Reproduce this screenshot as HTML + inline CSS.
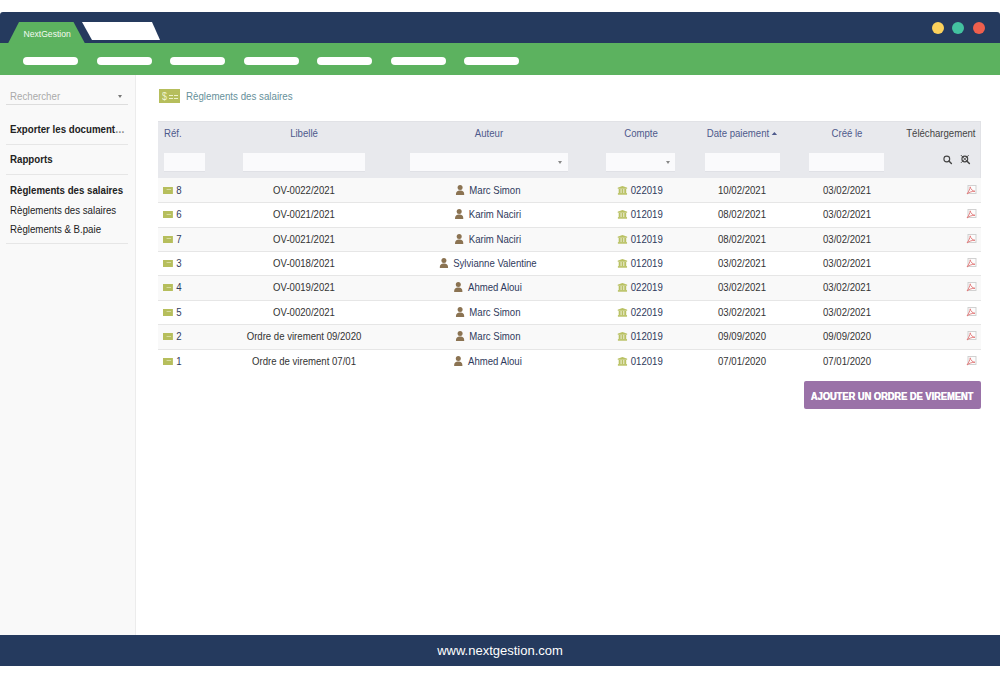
<!DOCTYPE html>
<html><head><meta charset="utf-8">
<style>
*{margin:0;padding:0;box-sizing:border-box}
html,body{width:1000px;height:679px;overflow:hidden;background:#fff;font-family:"Liberation Sans",sans-serif}
.abs{position:absolute}
#topbar{position:absolute;left:0;top:12px;width:1000px;height:31px;background:#253a5e;border-radius:3px 3px 0 0}
#greenbar{position:absolute;left:0;top:43px;width:1000px;height:32px;background:#5cb25f}
.pill{position:absolute;top:57px;height:8px;width:55px;background:#fff;border-radius:4px}
.dot{position:absolute;top:21.5px;width:12px;height:12px;border-radius:6px}
#sidebar{position:absolute;left:0;top:75px;width:136px;height:560px;background:#f9f9f9;border-right:1px solid #ececec}
#footer{position:absolute;left:0;top:635px;width:1000px;height:31px;background:#253a5e;color:#fff;font-size:13px;text-align:center;line-height:31px}
.side{position:absolute;left:9.5px;font-size:10.6px;color:#222;white-space:nowrap;transform-origin:0 0;transform:scaleX(0.915)}
.sep{position:absolute;left:6px;width:122px;height:1px;background:#e6e6e6}

.title{position:absolute;left:185.8px;top:89.5px;font-size:11px;color:#66909a;white-space:nowrap;transform:scaleX(0.885);transform-origin:0 0}
.ticon{position:absolute;left:159px;top:88.5px;width:20.5px;height:14.5px;background:#b6be5c}
#thead{position:absolute;left:158.3px;top:120.5px;width:822.5px;height:57.5px;background:#e8e9ed;border-top:1px solid #e1e2e6;border-right:1px solid #e1e2e6}
.th{position:absolute;top:127.4px;font-size:10.67px;color:#4e5a8c;white-space:nowrap;transform:scaleX(0.9);transform-origin:50% 50%}
.inp{position:absolute;top:152.8px;height:18.8px;background:#fafafc;border-bottom:1px solid #e0e1e6}
.sarr{position:absolute;width:0;height:0;border-left:2.5px solid transparent;border-right:2.5px solid transparent;border-top:3px solid #888}
.row{position:absolute;left:158.3px;width:822.5px;height:24.3px}
.rsep{position:absolute;left:158.3px;width:822.5px;height:1px;background:#e6e6e6}
.cell{position:absolute;font-size:10.67px;color:#333;white-space:nowrap;line-height:12px;transform:scaleX(0.9);transform-origin:50% 50%}
.c{text-align:center}
.nav{color:#2f3a5c}
.ref{left:163px;transform-origin:0 50%}
.num{color:#2f3a5c;margin-left:4.1px}
.money{display:inline-block;width:10.7px;height:7px;background:#b6be5c;vertical-align:0px;position:relative}
.money i{position:absolute;left:3.5px;top:2.5px;width:5px;height:1px;background:#d8dca0}
.ic{display:inline-block;vertical-align:-1px;margin-right:4px}
.btn{position:absolute;left:803.8px;top:381px;width:177px;height:27.6px;background:#9a72a8;border-radius:2px;color:#fff;font-weight:bold;font-size:11.4px;text-align:center;line-height:27.6px;white-space:nowrap;text-shadow:0.35px 0 0 #fff}
.btn span{position:absolute;left:50%;top:2px;transform:translateX(-50%) scaleX(0.815)}
</style></head>
<body>
<div id="topbar"></div>
<div id="greenbar"></div>
<svg class="abs" style="left:0;top:0" width="200" height="50">
  <polygon points="8,43.5 19,22 73.5,22 85,43.5" fill="#5cb25f"/>
  <polygon points="82,22 152,22 160,40 92,40" fill="#fff"/>
</svg>
<div class="abs" style="left:23.5px;top:29px;font-size:8.6px;color:#f4faf0">NextGestion</div>
<div class="pill" style="left:23px"></div>
<div class="pill" style="left:96.5px"></div>
<div class="pill" style="left:170px"></div>
<div class="pill" style="left:243.5px"></div>
<div class="pill" style="left:317px"></div>
<div class="pill" style="left:390.5px"></div>
<div class="pill" style="left:464px"></div>
<div class="dot" style="left:932px;background:#fcd15c"></div>
<div class="dot" style="left:952px;background:#43c2a0"></div>
<div class="dot" style="left:973px;background:#ef5f4d"></div>

<div id="sidebar"></div>
<div class="side" style="top:90px;color:#aaa">Rechercher</div>
<div class="sarr" style="left:117.5px;top:95px;border-top-color:#777"></div>
<div class="abs" style="left:6px;top:104px;width:122px;height:1px;background:#ddd"></div>
<div class="side" style="top:122.6px;font-weight:bold">Exporter les document<span style="color:#888">…</span></div>
<div class="sep" style="top:143.5px"></div>
<div class="side" style="top:153.3px;font-weight:bold">Rapports</div>
<div class="sep" style="top:174px"></div>
<div class="side" style="top:184px;font-weight:bold">Règlements des salaires</div>
<div class="side" style="top:204px">Règlements des salaires</div>
<div class="side" style="top:223px">Règlements &amp; B.paie</div>
<div class="sep" style="top:243px"></div>


<div class="ticon"></div>
<div class="abs" style="left:162.2px;top:89.6px;font-size:10.5px;color:#f0f3d0;transform:scaleX(0.85);transform-origin:0 0">$</div>
<div class="abs" style="left:169px;top:94.8px;width:4px;height:1.2px;background:#eef2c8"></div>
<div class="abs" style="left:169px;top:97.8px;width:4px;height:1.2px;background:#eef2c8"></div>
<div class="abs" style="left:174px;top:94.8px;width:4px;height:1.2px;background:#eef2c8"></div>
<div class="abs" style="left:174px;top:97.8px;width:4px;height:1.2px;background:#eef2c8"></div>
<div class="title">Règlements des salaires</div>
<div id="thead"></div>
<div class="th" style="left:164px;transform-origin:0 50%">Réf.</div>
<div class="th" style="left:204px;width:200px;text-align:center">Libellé</div>
<div class="th" style="left:388.7px;width:200px;text-align:center">Auteur</div>
<div class="th" style="left:560.7px;width:160px;text-align:center">Compte</div>
<div class="th" style="left:662px;width:160px;text-align:center">Date paiement <span style="display:inline-block;border-left:3.3px solid transparent;border-right:3.3px solid transparent;border-bottom:3.5px solid #4e5a8c;vertical-align:2px"></span></div>
<div class="th" style="left:766.8px;width:160px;text-align:center">Créé le</div>
<div class="th" style="left:825px;width:150.5px;text-align:right;color:#444;transform-origin:100% 50%">Téléchargement</div>
<div class="inp" style="left:163.5px;width:41.5px"></div>
<div class="inp" style="left:243px;width:122px"></div>
<div class="inp" style="left:410px;width:157.5px"></div>
<div class="sarr" style="left:557.5px;top:161px"></div>
<div class="inp" style="left:606px;width:69.3px"></div>
<div class="sarr" style="left:665.5px;top:161px"></div>
<div class="inp" style="left:704.7px;width:75.3px"></div>
<div class="inp" style="left:809px;width:75.3px"></div>
<svg class="abs" style="left:940px;top:152px" width="35" height="16" viewBox="0 0 35 16">
 <circle cx="6.8" cy="7" r="2.9" fill="none" stroke="#444" stroke-width="1.1"/>
 <line x1="8.9" y1="9.1" x2="11.4" y2="11.6" stroke="#444" stroke-width="1.4" stroke-linecap="round"/>
 <circle cx="24.8" cy="7" r="2.9" fill="none" stroke="#444" stroke-width="1.1"/>
 <line x1="20.8" y1="3" x2="29.4" y2="11.6" stroke="#444" stroke-width="0.9"/>
 <line x1="26.9" y1="9.1" x2="29.4" y2="11.6" stroke="#444" stroke-width="1.4" stroke-linecap="round"/>
 <line x1="28.8" y1="3" x2="20.8" y2="11" stroke="#444" stroke-width="0.8"/>
</svg>
<div class="row" style="top:178px;height:24px;background:#f9f9f9"></div>
<div class="cell ref" style="top:183.6px"><span class="money"><i></i></span><span class="num">8</span></div>
<div class="cell c" style="top:183.6px;left:204px;width:200px">OV-0022/2021</div>
<div class="cell c nav" style="top:183.6px;left:388.1px;width:200px"><svg class="ic" style="margin-right:5.4px" width="10" height="10" viewBox="0 0 9 10" preserveAspectRatio="none"><circle cx="4.5" cy="2.5" r="2.5" fill="#8b7352"/><path d="M0.3 10 C0.3 6.2 2 5.4 4.5 5.4 C7 5.4 8.7 6.2 8.7 10 Z" fill="#8b7352"/></svg>Marc Simon</div>
<div class="cell c nav" style="top:183.6px;left:560.2px;width:160px"><svg class="ic" width="11" height="9" viewBox="0 0 10 9" preserveAspectRatio="none" style="vertical-align:-1px"><path d="M5 0 L10 1.8 L10 2.7 L0 2.7 L0 1.8 Z" fill="#b9c163"/><rect x="1.2" y="2.9" width="2" height="4.3" fill="#b9c163"/><rect x="4" y="2.9" width="2" height="4.3" fill="#b9c163"/><rect x="6.8" y="2.9" width="2" height="4.3" fill="#b9c163"/><rect x="0.3" y="7.1" width="9.4" height="1.6" fill="#b9c163"/></svg>022019</div>
<div class="cell c" style="top:183.6px;left:662px;width:160px">10/02/2021</div>
<div class="cell c" style="top:183.6px;left:766.8px;width:160px">03/02/2021</div>
<div class="abs" style="top:184.9px;left:965.5px;line-height:0"><svg class="pdf" width="11" height="10" viewBox="0 0 11 10"><rect x="2" y="0.5" width="8" height="8" fill="#fcfcfc" stroke="#cdcdcd" stroke-width="0.9"/><path d="M1 9 C3 6 4 4 4.2 1.8 C4.8 4.5 6.5 6 9 6.3 C6 6.2 3.5 7 1 9 Z" fill="none" stroke="#e07272" stroke-width="0.85"/></svg></div>
<div class="row" style="top:202px;height:25px;background:#fff"></div>
<div class="rsep" style="top:202px"></div>
<div class="cell ref" style="top:208.1px"><span class="money"><i></i></span><span class="num">6</span></div>
<div class="cell c" style="top:208.1px;left:204px;width:200px">OV-0021/2021</div>
<div class="cell c nav" style="top:208.1px;left:388.1px;width:200px"><svg class="ic" style="margin-right:5.4px" width="10" height="10" viewBox="0 0 9 10" preserveAspectRatio="none"><circle cx="4.5" cy="2.5" r="2.5" fill="#8b7352"/><path d="M0.3 10 C0.3 6.2 2 5.4 4.5 5.4 C7 5.4 8.7 6.2 8.7 10 Z" fill="#8b7352"/></svg>Karim Naciri</div>
<div class="cell c nav" style="top:208.1px;left:560.2px;width:160px"><svg class="ic" width="11" height="9" viewBox="0 0 10 9" preserveAspectRatio="none" style="vertical-align:-1px"><path d="M5 0 L10 1.8 L10 2.7 L0 2.7 L0 1.8 Z" fill="#b9c163"/><rect x="1.2" y="2.9" width="2" height="4.3" fill="#b9c163"/><rect x="4" y="2.9" width="2" height="4.3" fill="#b9c163"/><rect x="6.8" y="2.9" width="2" height="4.3" fill="#b9c163"/><rect x="0.3" y="7.1" width="9.4" height="1.6" fill="#b9c163"/></svg>012019</div>
<div class="cell c" style="top:208.1px;left:662px;width:160px">08/02/2021</div>
<div class="cell c" style="top:208.1px;left:766.8px;width:160px">03/02/2021</div>
<div class="abs" style="top:209.4px;left:965.5px;line-height:0"><svg class="pdf" width="11" height="10" viewBox="0 0 11 10"><rect x="2" y="0.5" width="8" height="8" fill="#fcfcfc" stroke="#cdcdcd" stroke-width="0.9"/><path d="M1 9 C3 6 4 4 4.2 1.8 C4.8 4.5 6.5 6 9 6.3 C6 6.2 3.5 7 1 9 Z" fill="none" stroke="#e07272" stroke-width="0.85"/></svg></div>
<div class="row" style="top:227px;height:24px;background:#f9f9f9"></div>
<div class="rsep" style="top:227px"></div>
<div class="cell ref" style="top:232.6px"><span class="money"><i></i></span><span class="num">7</span></div>
<div class="cell c" style="top:232.6px;left:204px;width:200px">OV-0021/2021</div>
<div class="cell c nav" style="top:232.6px;left:388.1px;width:200px"><svg class="ic" style="margin-right:5.4px" width="10" height="10" viewBox="0 0 9 10" preserveAspectRatio="none"><circle cx="4.5" cy="2.5" r="2.5" fill="#8b7352"/><path d="M0.3 10 C0.3 6.2 2 5.4 4.5 5.4 C7 5.4 8.7 6.2 8.7 10 Z" fill="#8b7352"/></svg>Karim Naciri</div>
<div class="cell c nav" style="top:232.6px;left:560.2px;width:160px"><svg class="ic" width="11" height="9" viewBox="0 0 10 9" preserveAspectRatio="none" style="vertical-align:-1px"><path d="M5 0 L10 1.8 L10 2.7 L0 2.7 L0 1.8 Z" fill="#b9c163"/><rect x="1.2" y="2.9" width="2" height="4.3" fill="#b9c163"/><rect x="4" y="2.9" width="2" height="4.3" fill="#b9c163"/><rect x="6.8" y="2.9" width="2" height="4.3" fill="#b9c163"/><rect x="0.3" y="7.1" width="9.4" height="1.6" fill="#b9c163"/></svg>012019</div>
<div class="cell c" style="top:232.6px;left:662px;width:160px">08/02/2021</div>
<div class="cell c" style="top:232.6px;left:766.8px;width:160px">03/02/2021</div>
<div class="abs" style="top:233.9px;left:965.5px;line-height:0"><svg class="pdf" width="11" height="10" viewBox="0 0 11 10"><rect x="2" y="0.5" width="8" height="8" fill="#fcfcfc" stroke="#cdcdcd" stroke-width="0.9"/><path d="M1 9 C3 6 4 4 4.2 1.8 C4.8 4.5 6.5 6 9 6.3 C6 6.2 3.5 7 1 9 Z" fill="none" stroke="#e07272" stroke-width="0.85"/></svg></div>
<div class="row" style="top:251px;height:24px;background:#fff"></div>
<div class="rsep" style="top:251px"></div>
<div class="cell ref" style="top:256.6px"><span class="money"><i></i></span><span class="num">3</span></div>
<div class="cell c" style="top:256.6px;left:204px;width:200px">OV-0018/2021</div>
<div class="cell c nav" style="top:256.6px;left:388.1px;width:200px"><svg class="ic" style="margin-right:5.4px" width="10" height="10" viewBox="0 0 9 10" preserveAspectRatio="none"><circle cx="4.5" cy="2.5" r="2.5" fill="#8b7352"/><path d="M0.3 10 C0.3 6.2 2 5.4 4.5 5.4 C7 5.4 8.7 6.2 8.7 10 Z" fill="#8b7352"/></svg>Sylvianne Valentine</div>
<div class="cell c nav" style="top:256.6px;left:560.2px;width:160px"><svg class="ic" width="11" height="9" viewBox="0 0 10 9" preserveAspectRatio="none" style="vertical-align:-1px"><path d="M5 0 L10 1.8 L10 2.7 L0 2.7 L0 1.8 Z" fill="#b9c163"/><rect x="1.2" y="2.9" width="2" height="4.3" fill="#b9c163"/><rect x="4" y="2.9" width="2" height="4.3" fill="#b9c163"/><rect x="6.8" y="2.9" width="2" height="4.3" fill="#b9c163"/><rect x="0.3" y="7.1" width="9.4" height="1.6" fill="#b9c163"/></svg>012019</div>
<div class="cell c" style="top:256.6px;left:662px;width:160px">03/02/2021</div>
<div class="cell c" style="top:256.6px;left:766.8px;width:160px">03/02/2021</div>
<div class="abs" style="top:257.9px;left:965.5px;line-height:0"><svg class="pdf" width="11" height="10" viewBox="0 0 11 10"><rect x="2" y="0.5" width="8" height="8" fill="#fcfcfc" stroke="#cdcdcd" stroke-width="0.9"/><path d="M1 9 C3 6 4 4 4.2 1.8 C4.8 4.5 6.5 6 9 6.3 C6 6.2 3.5 7 1 9 Z" fill="none" stroke="#e07272" stroke-width="0.85"/></svg></div>
<div class="row" style="top:275px;height:25px;background:#f9f9f9"></div>
<div class="rsep" style="top:275px"></div>
<div class="cell ref" style="top:281.1px"><span class="money"><i></i></span><span class="num">4</span></div>
<div class="cell c" style="top:281.1px;left:204px;width:200px">OV-0019/2021</div>
<div class="cell c nav" style="top:281.1px;left:388.1px;width:200px"><svg class="ic" style="margin-right:5.4px" width="10" height="10" viewBox="0 0 9 10" preserveAspectRatio="none"><circle cx="4.5" cy="2.5" r="2.5" fill="#8b7352"/><path d="M0.3 10 C0.3 6.2 2 5.4 4.5 5.4 C7 5.4 8.7 6.2 8.7 10 Z" fill="#8b7352"/></svg>Ahmed Aloui</div>
<div class="cell c nav" style="top:281.1px;left:560.2px;width:160px"><svg class="ic" width="11" height="9" viewBox="0 0 10 9" preserveAspectRatio="none" style="vertical-align:-1px"><path d="M5 0 L10 1.8 L10 2.7 L0 2.7 L0 1.8 Z" fill="#b9c163"/><rect x="1.2" y="2.9" width="2" height="4.3" fill="#b9c163"/><rect x="4" y="2.9" width="2" height="4.3" fill="#b9c163"/><rect x="6.8" y="2.9" width="2" height="4.3" fill="#b9c163"/><rect x="0.3" y="7.1" width="9.4" height="1.6" fill="#b9c163"/></svg>022019</div>
<div class="cell c" style="top:281.1px;left:662px;width:160px">03/02/2021</div>
<div class="cell c" style="top:281.1px;left:766.8px;width:160px">03/02/2021</div>
<div class="abs" style="top:282.4px;left:965.5px;line-height:0"><svg class="pdf" width="11" height="10" viewBox="0 0 11 10"><rect x="2" y="0.5" width="8" height="8" fill="#fcfcfc" stroke="#cdcdcd" stroke-width="0.9"/><path d="M1 9 C3 6 4 4 4.2 1.8 C4.8 4.5 6.5 6 9 6.3 C6 6.2 3.5 7 1 9 Z" fill="none" stroke="#e07272" stroke-width="0.85"/></svg></div>
<div class="row" style="top:300px;height:24px;background:#fff"></div>
<div class="rsep" style="top:300px"></div>
<div class="cell ref" style="top:305.6px"><span class="money"><i></i></span><span class="num">5</span></div>
<div class="cell c" style="top:305.6px;left:204px;width:200px">OV-0020/2021</div>
<div class="cell c nav" style="top:305.6px;left:388.1px;width:200px"><svg class="ic" style="margin-right:5.4px" width="10" height="10" viewBox="0 0 9 10" preserveAspectRatio="none"><circle cx="4.5" cy="2.5" r="2.5" fill="#8b7352"/><path d="M0.3 10 C0.3 6.2 2 5.4 4.5 5.4 C7 5.4 8.7 6.2 8.7 10 Z" fill="#8b7352"/></svg>Marc Simon</div>
<div class="cell c nav" style="top:305.6px;left:560.2px;width:160px"><svg class="ic" width="11" height="9" viewBox="0 0 10 9" preserveAspectRatio="none" style="vertical-align:-1px"><path d="M5 0 L10 1.8 L10 2.7 L0 2.7 L0 1.8 Z" fill="#b9c163"/><rect x="1.2" y="2.9" width="2" height="4.3" fill="#b9c163"/><rect x="4" y="2.9" width="2" height="4.3" fill="#b9c163"/><rect x="6.8" y="2.9" width="2" height="4.3" fill="#b9c163"/><rect x="0.3" y="7.1" width="9.4" height="1.6" fill="#b9c163"/></svg>022019</div>
<div class="cell c" style="top:305.6px;left:662px;width:160px">03/02/2021</div>
<div class="cell c" style="top:305.6px;left:766.8px;width:160px">03/02/2021</div>
<div class="abs" style="top:306.9px;left:965.5px;line-height:0"><svg class="pdf" width="11" height="10" viewBox="0 0 11 10"><rect x="2" y="0.5" width="8" height="8" fill="#fcfcfc" stroke="#cdcdcd" stroke-width="0.9"/><path d="M1 9 C3 6 4 4 4.2 1.8 C4.8 4.5 6.5 6 9 6.3 C6 6.2 3.5 7 1 9 Z" fill="none" stroke="#e07272" stroke-width="0.85"/></svg></div>
<div class="row" style="top:324px;height:25px;background:#f9f9f9"></div>
<div class="rsep" style="top:324px"></div>
<div class="cell ref" style="top:330.1px"><span class="money"><i></i></span><span class="num">2</span></div>
<div class="cell c" style="top:330.1px;left:204px;width:200px">Ordre de virement 09/2020</div>
<div class="cell c nav" style="top:330.1px;left:388.1px;width:200px"><svg class="ic" style="margin-right:5.4px" width="10" height="10" viewBox="0 0 9 10" preserveAspectRatio="none"><circle cx="4.5" cy="2.5" r="2.5" fill="#8b7352"/><path d="M0.3 10 C0.3 6.2 2 5.4 4.5 5.4 C7 5.4 8.7 6.2 8.7 10 Z" fill="#8b7352"/></svg>Marc Simon</div>
<div class="cell c nav" style="top:330.1px;left:560.2px;width:160px"><svg class="ic" width="11" height="9" viewBox="0 0 10 9" preserveAspectRatio="none" style="vertical-align:-1px"><path d="M5 0 L10 1.8 L10 2.7 L0 2.7 L0 1.8 Z" fill="#b9c163"/><rect x="1.2" y="2.9" width="2" height="4.3" fill="#b9c163"/><rect x="4" y="2.9" width="2" height="4.3" fill="#b9c163"/><rect x="6.8" y="2.9" width="2" height="4.3" fill="#b9c163"/><rect x="0.3" y="7.1" width="9.4" height="1.6" fill="#b9c163"/></svg>012019</div>
<div class="cell c" style="top:330.1px;left:662px;width:160px">09/09/2020</div>
<div class="cell c" style="top:330.1px;left:766.8px;width:160px">09/09/2020</div>
<div class="abs" style="top:331.4px;left:965.5px;line-height:0"><svg class="pdf" width="11" height="10" viewBox="0 0 11 10"><rect x="2" y="0.5" width="8" height="8" fill="#fcfcfc" stroke="#cdcdcd" stroke-width="0.9"/><path d="M1 9 C3 6 4 4 4.2 1.8 C4.8 4.5 6.5 6 9 6.3 C6 6.2 3.5 7 1 9 Z" fill="none" stroke="#e07272" stroke-width="0.85"/></svg></div>
<div class="row" style="top:349px;height:24px;background:#fff"></div>
<div class="rsep" style="top:349px"></div>
<div class="cell ref" style="top:354.6px"><span class="money"><i></i></span><span class="num">1</span></div>
<div class="cell c" style="top:354.6px;left:204px;width:200px">Ordre de virement 07/01</div>
<div class="cell c nav" style="top:354.6px;left:388.1px;width:200px"><svg class="ic" style="margin-right:5.4px" width="10" height="10" viewBox="0 0 9 10" preserveAspectRatio="none"><circle cx="4.5" cy="2.5" r="2.5" fill="#8b7352"/><path d="M0.3 10 C0.3 6.2 2 5.4 4.5 5.4 C7 5.4 8.7 6.2 8.7 10 Z" fill="#8b7352"/></svg>Ahmed Aloui</div>
<div class="cell c nav" style="top:354.6px;left:560.2px;width:160px"><svg class="ic" width="11" height="9" viewBox="0 0 10 9" preserveAspectRatio="none" style="vertical-align:-1px"><path d="M5 0 L10 1.8 L10 2.7 L0 2.7 L0 1.8 Z" fill="#b9c163"/><rect x="1.2" y="2.9" width="2" height="4.3" fill="#b9c163"/><rect x="4" y="2.9" width="2" height="4.3" fill="#b9c163"/><rect x="6.8" y="2.9" width="2" height="4.3" fill="#b9c163"/><rect x="0.3" y="7.1" width="9.4" height="1.6" fill="#b9c163"/></svg>012019</div>
<div class="cell c" style="top:354.6px;left:662px;width:160px">07/01/2020</div>
<div class="cell c" style="top:354.6px;left:766.8px;width:160px">07/01/2020</div>
<div class="abs" style="top:355.9px;left:965.5px;line-height:0"><svg class="pdf" width="11" height="10" viewBox="0 0 11 10"><rect x="2" y="0.5" width="8" height="8" fill="#fcfcfc" stroke="#cdcdcd" stroke-width="0.9"/><path d="M1 9 C3 6 4 4 4.2 1.8 C4.8 4.5 6.5 6 9 6.3 C6 6.2 3.5 7 1 9 Z" fill="none" stroke="#e07272" stroke-width="0.85"/></svg></div>
<div class="btn"><span>AJOUTER UN ORDRE DE VIREMENT</span></div>
<div id="footer">www.nextgestion.com</div>
</body></html>
